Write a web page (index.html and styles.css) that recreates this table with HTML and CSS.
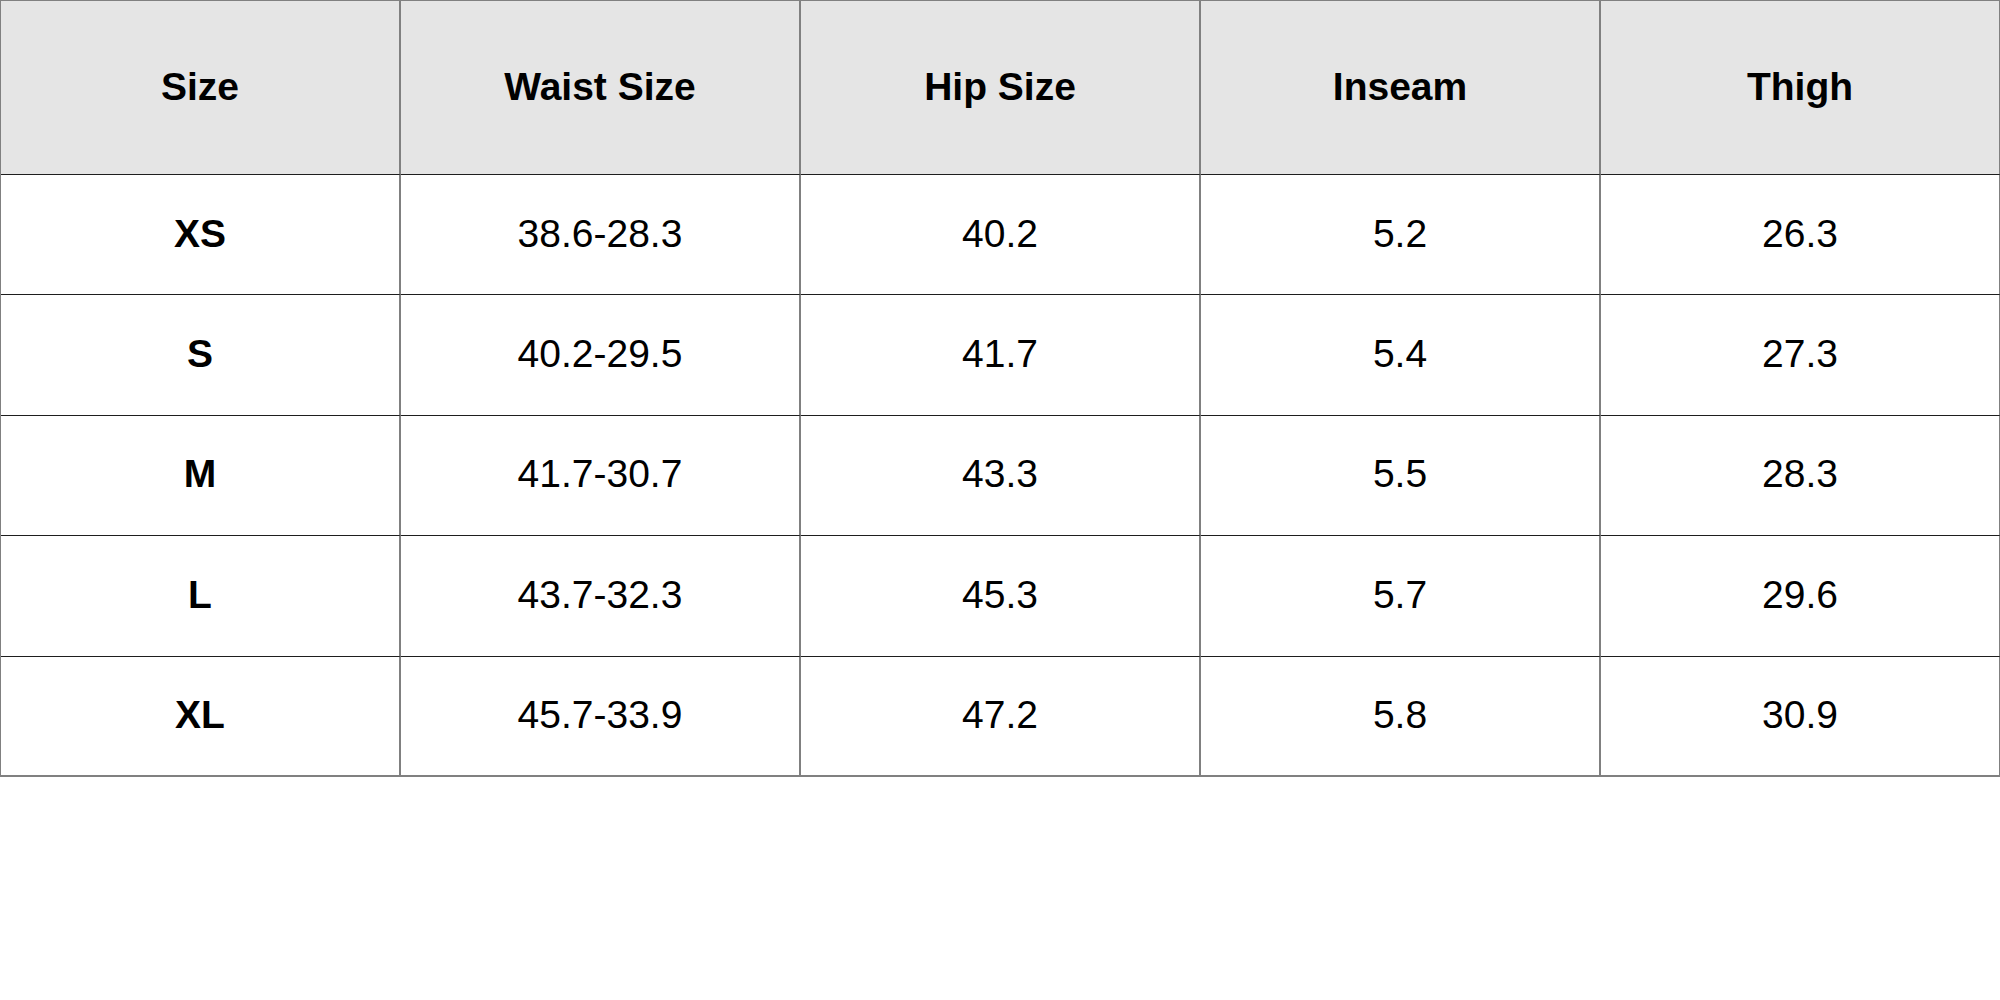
FILE: index.html
```html
<!DOCTYPE html>
<html lang="en">
<head>
<meta charset="utf-8">
<title>Size Chart</title>
<link rel="stylesheet" href="styles.css">
</head>
<body>
<div class="chart" role="table">
  <div class="cell head">Size</div>
  <div class="cell head">Waist Size</div>
  <div class="cell head">Hip Size</div>
  <div class="cell head">Inseam</div>
  <div class="cell head">Thigh</div>

  <div class="cell label">XS</div>
  <div class="cell">38.6-28.3</div>
  <div class="cell">40.2</div>
  <div class="cell">5.2</div>
  <div class="cell">26.3</div>

  <div class="cell label">S</div>
  <div class="cell">40.2-29.5</div>
  <div class="cell">41.7</div>
  <div class="cell">5.4</div>
  <div class="cell">27.3</div>

  <div class="cell label">M</div>
  <div class="cell">41.7-30.7</div>
  <div class="cell">43.3</div>
  <div class="cell">5.5</div>
  <div class="cell">28.3</div>

  <div class="cell label">L</div>
  <div class="cell">43.7-32.3</div>
  <div class="cell">45.3</div>
  <div class="cell">5.7</div>
  <div class="cell">29.6</div>

  <div class="cell label last">XL</div>
  <div class="cell last">45.7-33.9</div>
  <div class="cell last">47.2</div>
  <div class="cell last">5.8</div>
  <div class="cell last">30.9</div>
</div>
</body>
</html>
```
FILE: styles.css
```css
* {
  box-sizing: border-box;
}

html, body {
  margin: 0;
  padding: 0;
  background: #ffffff;
}

body {
  font-family: "Liberation Sans", Arial, sans-serif;
  color: #000000;
}

.chart {
  display: grid;
  grid-template-columns: repeat(5, 400px);
  grid-auto-rows: 120.4px;
  grid-template-rows: 174px;
  width: 2000px;
  border-top: 1px solid #808080;
  border-left: 1px solid #808080;
}

.cell {
  display: flex;
  align-items: center;
  justify-content: center;
  padding-bottom: 3px;
  font-size: 39px;
  line-height: 1;
  border-right: 2px solid #808080;
  border-bottom: 1px solid #1e1e1e;
}

.head {
  background: #e5e5e5;
  font-weight: 700;
}

.label {
  font-weight: 700;
}

.last {
  border-bottom: 2px solid #808080;
}
```
